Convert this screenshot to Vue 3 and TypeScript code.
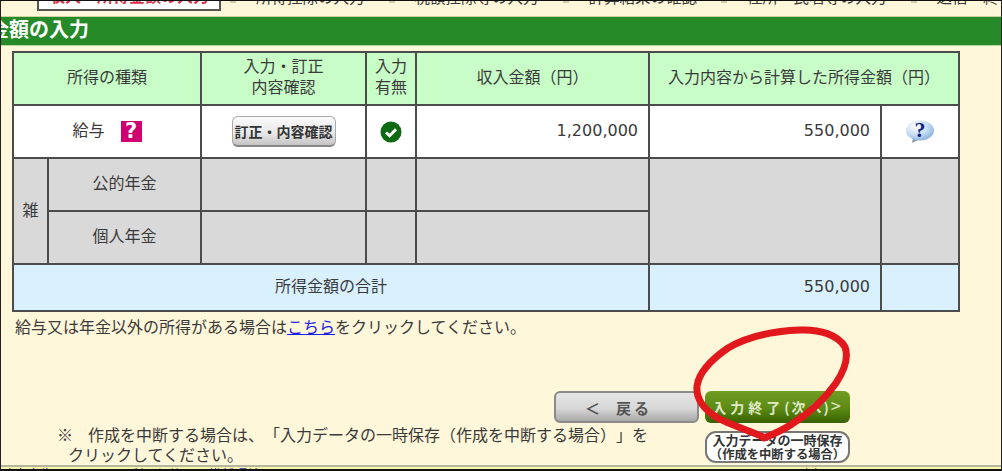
<template>
  <div class="page">
    <!-- Step navigation, cut off by the top of the window -->
    <nav class="steps">
      <span class="step current">収入・所得金額の入力</span>
      <span v-for="step in steps" :key="step" class="step">{{ step }}</span>
    </nav>

    <h1 class="title">金額の入力</h1>

    <table class="income">
      <colgroup>
        <col v-for="w in colWidths" :key="w.id" :style="{ width: w.px + 'px' }" />
      </colgroup>
      <thead>
        <tr>
          <th colspan="2">所得の種類</th>
          <th>入力・訂正<br />内容確認</th>
          <th>入力<br />有無</th>
          <th>収入金額（円）</th>
          <th colspan="2">入力内容から計算した所得金額（円）</th>
        </tr>
      </thead>
      <tbody>
        <tr>
          <td colspan="2">
            <div class="salary">
              <span class="salary-label">給与</span>
              <span class="help-square">?</span>
            </div>
          </td>
          <td class="center"><button type="button" class="edit-btn">訂正・内容確認</button></td>
          <td class="center">
            <svg class="check" width="22" height="22" viewBox="0 0 22 22">
              <circle cx="11" cy="11" r="10.5" fill="#0d6a12" />
              <path d="M6 11.5l3.6 3.2L16 8.2" fill="none" stroke="#fff" stroke-width="3" />
            </svg>
          </td>
          <td class="num">1,200,000</td>
          <td class="num">550,000</td>
          <td class="center">
            <svg class="bubble" width="30" height="26" viewBox="0 0 30 26">
              <defs>
                <radialGradient id="bubbleFill" cx="0.35" cy="0.3" r="0.8">
                  <stop offset="0" stop-color="#ffffff" />
                  <stop offset="0.55" stop-color="#c4dcf5" />
                  <stop offset="1" stop-color="#7fa9d8" />
                </radialGradient>
              </defs>
              <path d="M8 19l-1 5 7-3.6z" fill="#8b97a6" />
              <ellipse cx="15" cy="11.5" rx="14" ry="10" fill="url(#bubbleFill)" />
              <text x="15" y="18" class="bubble-mark">?</text>
            </svg>
          </td>
        </tr>
        <tr v-for="(name, i) in pensions" :key="name" class="off">
          <td v-if="i === 0" rowspan="2" class="center label">雑</td>
          <td class="center label">{{ name }}</td>
          <td></td>
          <td></td>
          <td></td>
          <td v-if="i === 0" rowspan="2"></td>
          <td v-if="i === 0" rowspan="2"></td>
        </tr>
        <tr class="total">
          <td colspan="5" class="center label">所得金額の合計</td>
          <td class="num">550,000</td>
          <td></td>
        </tr>
      </tbody>
    </table>

    <p class="other">給与又は年金以外の所得がある場合は<a href="#" @click.prevent>こちら</a>をクリックしてください。</p>

    <div class="actions">
      <button type="button" class="back-btn">＜&nbsp;&nbsp;戻る</button>
      <button type="button" class="next-btn">入力終了<span class="next-tail">(次へ)<span class="next-arrow">&gt;</span></span></button>
      <p class="note">
        <span class="note-mark">※</span>作成を中断する場合は、「入力データの一時保存（作成を中断する場合）」を<br />
        <span class="note-second">クリックしてください。</span>
      </p>
      <button type="button" class="save-btn">入力データの一時保存<br /><small>（作成を中断する場合）</small></button>
    </div>

    <footer class="foot">
      <span class="foot-links">確定申告について　　利用規約　　推奨環境</span>
      <span class="copy">Copyright (c) 2016 NATIONAL TAX AGENCY</span>
    </footer>

    <!-- Hand-drawn red circle over the next button -->
    <svg class="scribble" width="1002" height="471" viewBox="0 0 1002 471">
      <path
        d="M763 437C750 431 728 424 716 417C702 408 696 397 697 386C699 372 712 359 728 348C748 336 775 331 800 330C820 329 838 335 845 347C849 358 844 371 836 383C825 399 808 414 792 424C783 430 774 434 764 438"
        fill="none"
        stroke="#e2191c"
        stroke-width="7"
        stroke-linecap="round"
      />
    </svg>
  </div>
</template>

<script setup lang="ts">
interface ColWidth {
  id: string
  px: number
}

const steps: string[] = ['所得控除の入力', '税額控除等の入力', '計算結果の確認', '住所・氏名等の入力', '送信・終了']
const pensions: string[] = ['公的年金', '個人年金']

const colWidths: ColWidth[] = [
  { id: 'misc', px: 35 },
  { id: 'type', px: 153 },
  { id: 'edit', px: 165 },
  { id: 'has', px: 50 },
  { id: 'income', px: 233 },
  { id: 'amount', px: 232 },
  { id: 'help', px: 78 }
]
</script>

<style>
html,
body {
  margin: 0;
  overflow: hidden;
}
</style>

<style scoped>
.page {
  position: relative;
  box-sizing: border-box;
  width: 1002px;
  height: 471px;
  overflow: hidden;
  display: flex;
  flex-direction: column;
  background: #fff7da;
  border-top: 1px solid #111;
  border-left: 1px solid #222;
  border-right: 1px solid #222;
  border-bottom: 2px solid #111;
  font-family: "Noto Sans CJK JP", "Noto Sans", sans-serif;
  font-size: 16px;
  color: #3a3a3a;
  text-spacing-trim: space-all;
}

.steps {
  flex: none;
  height: 15px;
  display: flex;
  align-items: flex-end;
  overflow: hidden;
  border-bottom: 1px solid #cfd3a0;
  box-sizing: content-box;
  font-size: 15.5px;
  line-height: 16px;
}

.step {
  position: relative;
  flex: none;
  white-space: nowrap;
  margin-left: 50px;
  margin-bottom: 12px;
}

.step:nth-child(2) { margin-left: 35px; }

/* small arrow between the steps */
.step:not(.current)::before {
  content: "";
  position: absolute;
  left: -26px;
  bottom: 1px;
  width: 6px;
  height: 2px;
  background: #d0cbb0;
}

.step.current {
  box-sizing: border-box;
  width: 184px;
  margin-left: 36px;
  margin-bottom: 5px;
  height: 20px;
  background: #fff;
  border: 2px solid #555;
  border-top: 0;
  color: #d8334a;
  font-size: 16px;
  font-weight: 700;
  line-height: 9px;
  text-align: center;
}

.title {
  flex: none;
  height: 28px;
  margin: 0;
  overflow: hidden;
  background: #268a28;
  color: #fff;
  font-size: 20px;
  font-weight: 700;
  line-height: 24px;
  text-indent: -12px;
  border-bottom: 1px solid #b9d79a;
}

.income {
  flex: none;
  margin: 5px 0 0 11px;
  width: 948px;
  table-layout: fixed;
  border-collapse: collapse;
  background: #fff;
}

.income th,
.income td {
  padding: 0;
  border: 2px solid #4c4c4c;
  font-weight: 400;
  line-height: 21px;
}

.income th {
  box-sizing: border-box;
  height: 53px;
  padding-bottom: 5px;
  background: #c8fdc8;
}

.income td {
  height: 51px;
}

.income .label {
  box-sizing: border-box;
  height: 53px;
  padding-bottom: 4px;
}

.center {
  text-align: center;
  vertical-align: middle;
}

.income .num {
  box-sizing: border-box;
  padding: 0 10px 2px 0;
  text-align: right;
  font-family: "DejaVu Sans", sans-serif;
  font-size: 16px;
}

.off td {
  background: #d9d9d9;
}

.income .total td {
  height: 47px;
  box-sizing: border-box;
  background: #d9f0ff;
}

.salary {
  display: flex;
  align-items: center;
  justify-content: center;
  gap: 16px;
}

.salary-label {
  position: relative;
  top: -2px;
}

.help-square {
  width: 21px;
  height: 21px;
  background: #cf0070;
  color: #fff;
  font-family: "DejaVu Sans", sans-serif;
  font-size: 21px;
  font-weight: 700;
  line-height: 21px;
  text-align: center;
}

.edit-btn {
  width: 104px;
  height: 31px;
  padding: 0;
  border: 1px solid #aaa;
  border-bottom: 2px solid #888;
  border-radius: 6px;
  background: linear-gradient(#fbfbfb, #e6e6e6 60%, #c4c4c4);
  color: #333;
  font-family: inherit;
  font-size: 14px;
  font-weight: 700;
  white-space: nowrap;
  text-spacing-trim: normal;
}

.check,
.bubble {
  display: block;
  margin: 0 auto;
}

.bubble-mark {
  fill: #10257e;
  font-family: "Liberation Serif", serif;
  font-size: 22px;
  font-weight: 700;
  text-anchor: middle;
}

.other {
  flex: none;
  margin: 3px 0 0 14px;
  line-height: 22px;
}

.other a {
  color: #1a1ae6;
  text-decoration: underline;
}

.actions {
  flex: none;
  display: grid;
  grid-template-columns: 1fr 145px 145px;
  column-gap: 6px;
  row-gap: 8px;
  margin-top: 54px;
  padding-right: 151px;
}

.back-btn,
.next-btn {
  height: 32px;
  font-family: inherit;
  font-weight: 700;
  white-space: nowrap;
}

.back-btn {
  grid-column: 2;
  padding: 0 16px 0 0;
  border: 2px solid #8a8a8a;
  border-radius: 6px;
  background: linear-gradient(#e4e4e4, #d8d8d8 55%, #a9a9a9);
  color: #555;
  font-size: 15px;
  letter-spacing: 3px;
}

.next-btn {
  grid-column: 3;
  padding: 0;
  border: 0;
  border-radius: 6px;
  background: linear-gradient(#6f9e22, #5c8a14 55%, #386000);
  color: #dfe8c8;
  font-size: 14px;
  letter-spacing: 4px;
}

.next-tail {
  letter-spacing: 2px;
}

.next-arrow {
  font-size: 18px;
  font-weight: 400;
  line-height: 14px;
}

.note {
  grid-column: 1 / 3;
  margin: -7px 0 0 56px;
  line-height: 20px;
  white-space: nowrap;
}

.note-mark {
  display: inline-block;
  width: 31px;
}

.note-second {
  margin-left: 11px;
}

.save-btn {
  grid-column: 3;
  height: 32px;
  padding: 0;
  border: 2px solid #777;
  border-radius: 11px;
  background: #fff;
  color: #333;
  font-family: inherit;
  font-size: 13px;
  font-weight: 700;
  line-height: 14px;
  white-space: nowrap;
}

.save-btn small {
  font-size: 12.3px;
}

.foot {
  flex: 1;
  min-height: 0;
  margin-top: 1px;
  display: flex;
  justify-content: space-between;
  overflow: hidden;
  background: #fbf8a8;
  border-top: 2px solid #b5b5a0;
  font-size: 13px;
  line-height: 14px;
}

.foot-links {
  color: #2030c0;
}

.copy {
  padding-right: 8px;
}

.scribble {
  position: absolute;
  left: -1px;
  top: -1px;
  pointer-events: none;
}
</style>
